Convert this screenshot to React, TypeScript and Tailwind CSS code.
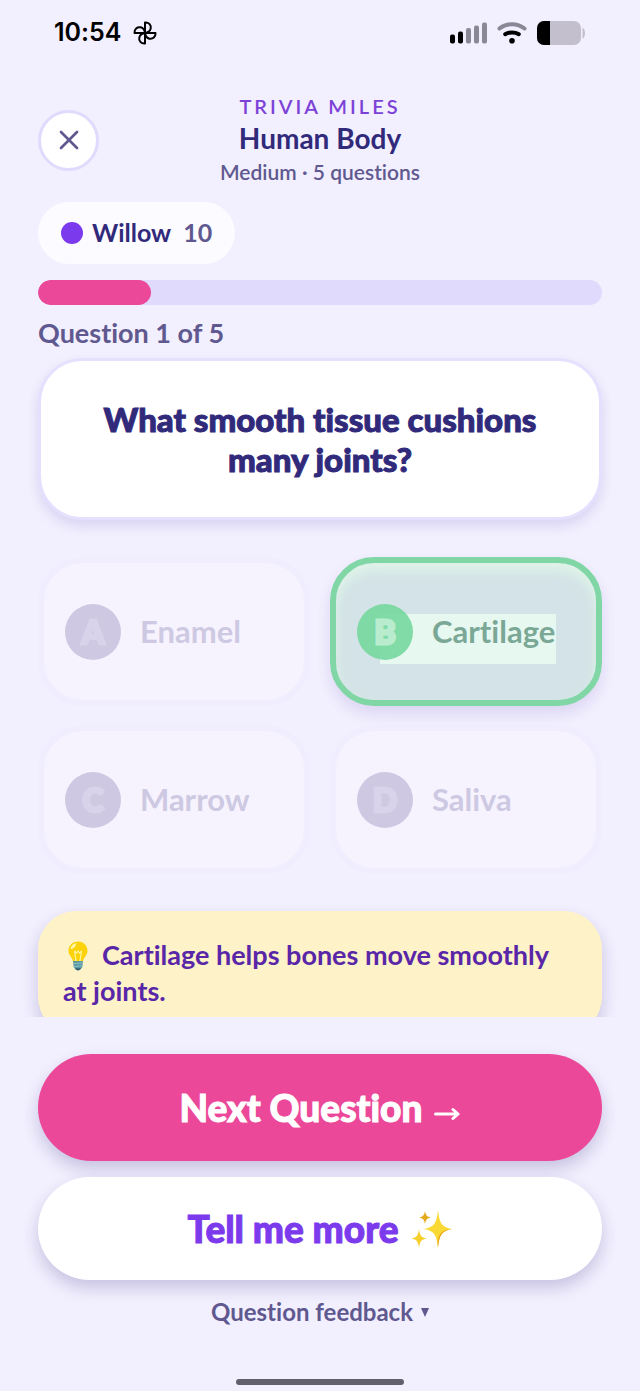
import { X } from 'lucide-react'
import clsx from 'clsx'

const answers = [
  { letter: 'A', text: 'Enamel', correct: false },
  { letter: 'B', text: 'Cartilage', correct: true },
  { letter: 'C', text: 'Marrow', correct: false },
  { letter: 'D', text: 'Saliva', correct: false },
]

function Pinwheel() {
  return (
    <svg viewBox="0 0 24 24" className="size-6" fill="none" stroke="black" strokeWidth="2" strokeLinejoin="round">
      {[0, 90, 180, 270].map((angle) => (
        <path key={angle} transform={`rotate(${angle} 12 12)`} d="M12 12 V1.5 C16 1.2 18.4 4.2 17.7 7.6 C17.1 10 15 11.6 12 12 Z" />
      ))}
    </svg>
  )
}

function StatusBar() {
  return (
    <div className="flex h-[66px] items-center justify-between px-[54px]">
      <div className="flex items-center gap-3">
        <span className="font-['Inter','Liberation_Sans',sans-serif] text-[25px] font-semibold text-black">10:54</span>
        <Pinwheel />
      </div>
      <div className="flex items-center gap-[9px]">
        <svg viewBox="0 0 38 22" className="h-[22px] w-[38px]">
          <rect x="0" y="12.5" width="5" height="9" rx="2" fill="#000" />
          <rect x="8" y="9.5" width="5" height="12" rx="2" fill="#000" />
          <rect x="16" y="6" width="5" height="15.5" rx="2" fill="#8b8895" />
          <rect x="24" y="3.5" width="5" height="18" rx="2" fill="#8b8895" />
          <rect x="32" y="0.5" width="5" height="21" rx="2" fill="#8b8895" />
        </svg>
        <svg viewBox="0 0 30 22" className="h-[22px] w-[30px]" fill="none" strokeLinecap="round" strokeWidth="4">
          <path d="M2.5 6.5 C9.5 0.8 20.5 0.8 27.5 6.5" stroke="#8b8895" />
          <path d="M8.2 12.2 C12 9.8 18 9.8 21.8 12.2" stroke="#000" />
          <circle cx="15" cy="18.8" r="2.8" fill="#000" />
        </svg>
        <svg viewBox="0 0 50 26" className="h-[26px] w-[50px]">
          <rect x="1" y="1" width="44" height="24" rx="7" fill="#c3bfcd" />
          <path d="M14 1 H8 a7 7 0 0 0 -7 7 V18 a7 7 0 0 0 7 7 H14 Z" fill="#000" />
          <path d="M46.5 8 C49.8 8.5 49.8 18 46.5 18.5 Z" fill="#c3bfcd" />
        </svg>
      </div>
    </div>
  )
}

function Bulb() {
  return (
    <svg viewBox="0 0 30 30" className="mr-[9px] inline-block size-[30px] align-[-6px]">
      <path d="M15 0.5 C9.5 0.5 5.5 4.5 5.5 10 C5.5 14.5 9.8 16.5 10.2 21 H19.8 C20.2 16.5 24.5 14.5 24.5 10 C24.5 4.5 20.5 0.5 15 0.5 Z" fill="#fcd20b" />
      <path d="M7.5 8 C8 4.5 10.5 2.3 13.5 2.2 C13 5 10.5 8 7.5 8 Z" fill="#fff7a8" />
      <path d="M11.5 10 L13 20 M18.5 10 L17 20 M11.5 10 L13.5 12 L15 10 L16.5 12 L18.5 10" fill="none" stroke="#fff3a0" strokeWidth="1.2" />
      <path d="M10 20 H20 L19.3 26 C18 28 17 29.3 15 29.3 C13 29.3 12 28 10.7 26 Z" fill="#5b98a5" />
      <path d="M10.3 22.8 L19.7 21.8 M10.7 25.6 L19.3 24.6" stroke="#8fc0bd" strokeWidth="1" />
      <path d="M12 27.3 H18 C17 29 16 29.5 15 29.5 C14 29.5 13 29 12 27.3 Z" fill="#34606f" />
    </svg>
  )
}

function Sparkles() {
  return (
    <svg viewBox="0 0 42 40" className="h-10 w-[42px]">
      <path d="M27 1 C28.5 14 30.5 18 41 20 C30.5 22 28.5 26 27 39 C25.5 26 23.5 22 13 20 C23.5 18 25.5 14 27 1 Z" fill="#fad934" />
      <path d="M41 20 C30.5 22 28.5 26 27 39 L26.5 34 C27.5 25 30 21 41 20 Z" fill="#e9a820" />
      <path d="M8 20 C9 27 10.5 28.5 15.5 29.5 C10.5 30.5 9 32 8 39 C7 32 5.5 30.5 0.5 29.5 C5.5 28.5 7 27 8 20 Z" fill="#f7cf2d" />
      <path d="M14 2 C14.8 6.5 16 7.5 19.5 8.5 C16 9.5 14.8 10.5 14 15 C13.2 10.5 12 9.5 8.5 8.5 C12 7.5 13.2 6.5 14 2 Z" fill="#e5a91c" />
    </svg>
  )
}

function Answer({ letter, text, correct }: { letter: string; text: string; correct: boolean }) {
  return (
    <button
      type="button"
      className={clsx(
        'relative flex h-[149px] items-center gap-[19px] rounded-[44px] border-[6px] bg-clip-padding pl-[21px] text-left',
        correct
          ? 'border-[#80d7a5] bg-[#d4e3e7] shadow-[0_8px_14px_rgba(91,72,180,0.14),inset_0_8px_12px_rgba(225,247,232,0.8)]'
          : 'border-[#f0edfe] bg-[#f6f3ff]'
      )}
    >
      {correct && <span className="absolute left-11 top-[51px] h-[50px] w-44 bg-[#e7f8f1]" />}
      <span
        className={clsx(
          'relative flex size-14 shrink-0 items-center justify-center rounded-full text-[32px] font-black [-webkit-text-stroke:3px]',
          correct ? 'bg-[#74d79d]/90 text-[#b9eccf]' : 'bg-[#cec8e3] text-[#d8d3ea]'
        )}
      >
        {letter}
      </span>
      <span className={clsx('relative text-[31px] font-bold', correct ? 'text-[#7ba896]' : 'text-[#cec9e2]')}>
        {text}
      </span>
    </button>
  )
}

export default function App() {
  return (
    <div className="flex h-screen flex-col bg-[#f2effe] font-['Lato','Open_Sans',sans-serif] text-[#5f598f] [font-variant-ligatures:none]">
      <StatusBar />

      <main className="min-h-0 flex-1 overflow-hidden px-[38px] pt-[28px]">
        <header className="grid grid-cols-[61px_1fr_61px] items-center">
          <button
            type="button"
            aria-label="Close"
            className="flex size-[61px] items-center justify-center rounded-full border-[3px] border-[#e0dafd] bg-white"
          >
            <X className="size-8" strokeWidth={2} />
          </button>
          <div className="text-center">
            <p className="text-[20px] leading-6 font-semibold tracking-[3px] text-[#7c42d8]">TRIVIA MILES</p>
            <h1 className="text-[28px] leading-10 font-bold text-[#312a7b]">Human Body</h1>
            <p className="text-[21px] leading-7 font-semibold">Medium · 5 questions</p>
          </div>
        </header>

        <div className="mt-4 flex">
          <div className="flex h-[62px] items-center rounded-full bg-[#fcfbff] px-[23px] text-[25px] font-bold">
            <span className="mr-[9px] size-[22px] rounded-full bg-[#7c3aed]" />
            <span className="text-[#312a7b]">Willow</span>
            <span className="ml-3">10</span>
          </div>
        </div>

        <div className="mt-4 h-[25px] overflow-hidden rounded-full bg-[#e0dafd]">
          <div className="h-full w-1/5 rounded-full bg-[#ec4899]" />
        </div>
        <p className="mt-[10px] text-[27px] leading-9 font-bold">Question 1 of 5</p>

        <section className="mt-[7px] rounded-[44px] border-[3px] border-[#e5e0fd] bg-white px-10 py-[38px] shadow-[0_6px_12px_rgba(91,72,180,0.16)]">
          <h2 className="text-center text-[33px] leading-10 font-black text-[#312a7b] [-webkit-text-stroke:1px]">
            What smooth tissue cushions many joints?
          </h2>
        </section>

        <div className="mt-[37px] grid grid-cols-2 gap-x-5 gap-y-[19px]">
          {answers.map((answer) => (
            <Answer key={answer.letter} {...answer} />
          ))}
        </div>

        <p className="mt-[37px] rounded-[38px] bg-[#fdf2c8] px-[25px] py-[26px] text-[27px] leading-9 font-bold text-[#5a26a8] shadow-[0_8px_16px_rgba(49,42,123,0.22)]">
          <Bulb />
          Cartilage helps bones move smoothly at joints.
        </p>
      </main>

      <footer className="flex flex-col items-center px-[38px] pt-[37px] pb-[6px]">
        <button
          type="button"
          className="flex h-[107px] w-full items-center justify-center gap-3 rounded-full bg-[#ec4899] text-[37px] font-black text-white shadow-[0_8px_16px_rgba(49,42,123,0.22)]"
        >
          <span className="[-webkit-text-stroke:1px]">Next Question</span>
          <svg viewBox="0 0 26 14" className="mt-3 h-[14px] w-[26px]" fill="none" stroke="currentColor" strokeWidth="3" strokeLinecap="round" strokeLinejoin="round">
            <path d="M1.5 7 H24 M19 2.5 L24 7 L19 11.5" />
          </svg>
        </button>
        <button
          type="button"
          className="mt-4 flex h-[103px] w-full items-center justify-center gap-3 rounded-full bg-white text-[37px] font-black text-[#7c3aed] shadow-[0_8px_16px_rgba(49,42,123,0.22)]"
        >
          <span className="[-webkit-text-stroke:1px]">Tell me more</span>
          <Sparkles />
        </button>
        <button type="button" className="mt-4 flex items-center gap-2 text-[24px] leading-8 font-bold">
          Question feedback
          <svg viewBox="0 0 8 9" className="h-[9px] w-2" fill="currentColor">
            <path d="M0 0 H8 L4 9 Z" />
          </svg>
        </button>
        <div className="mt-[51px] h-[6px] w-[168px] rounded-full bg-[#625f6c]" />
      </footer>
    </div>
  )
}
